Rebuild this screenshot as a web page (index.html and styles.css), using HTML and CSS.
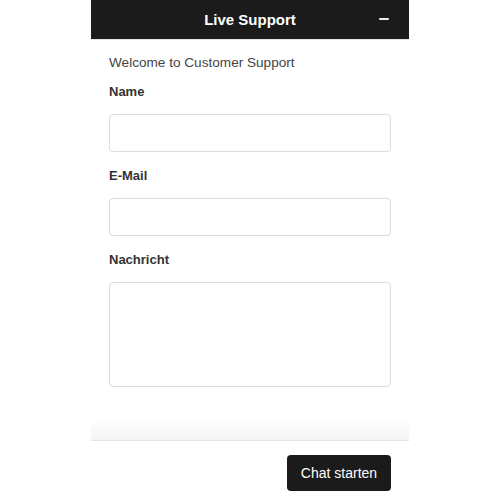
FILE: index.html
```html
<!DOCTYPE html>
<html>
<head>
<meta charset="utf-8">
<link rel="stylesheet" href="styles.css">
</head>
<body>
<div class="panel">
  <header class="head">
    <span class="title">Live Support</span>
    <span class="minimize"></span>
  </header>
  <main class="content">
    <p class="welcome">Welcome to Customer Support</p>
    <label class="label">Name</label>
    <div class="input"></div>
    <label class="label">E-Mail</label>
    <div class="input"></div>
    <label class="label">Nachricht</label>
    <div class="input area"></div>
  </main>
  <div class="fade"></div>
  <footer class="foot">
    <button class="btn">Chat starten</button>
  </footer>
</div>
</body>
</html>
```

FILE: styles.css
```css
html, body {
  margin: 0;
  padding: 0;
  background: #fff;
}
body {
  font-family: "Liberation Sans", Arial, sans-serif;
}
.panel {
  width: 318px;
  height: 500px;
  margin: 0 auto;
  display: flex;
  flex-direction: column;
  background: #fff;
}
.head {
  height: 40px;
  background: #1b1b1b;
  position: relative;
  display: flex;
  align-items: center;
  justify-content: center;
  border-bottom: 1px solid #e6e6e6;
  box-sizing: border-box;
}
.title {
  color: #fff;
  font-weight: bold;
  font-size: 15px;
}
.minimize {
  position: absolute;
  right: 20px;
  top: 18px;
  width: 10px;
  height: 2px;
  background: #f2f2f2;
  border-radius: 1px;
}
.content {
  flex: 1;
  padding: 13px 18px 0;
  display: flex;
  flex-direction: column;
}
.welcome {
  margin: 0;
  font-size: 13.6px;
  line-height: 20px;
  color: #444;
}
.label {
  display: block;
  font-size: 13px;
  font-weight: bold;
  line-height: 18px;
  color: #333;
  margin-top: 9px;
  margin-bottom: 13px;
}
.welcome + .label {
  margin-top: 10px;
}
.input {
  height: 38px;
  box-sizing: border-box;
  border: 1px solid #dcdcdc;
  border-radius: 4px;
  background: #fff;
  margin-bottom: 6px;
}
.input + .label {
  margin-top: 9px;
}
.area {
  height: 105px;
}
.fade {
  height: 20px;
  background: linear-gradient(to bottom, rgba(245,245,245,0), #f3f3f3);
  border-bottom: 1px solid #e4e4e4;
}
.foot {
  height: 59px;
  box-sizing: border-box;
  padding: 14px 18px 0;
  display: flex;
  justify-content: flex-end;
  align-items: flex-start;
}
.btn {
  height: 36px;
  width: 104px;
  border: none;
  border-radius: 4px;
  background: #1b1b1b;
  color: #fff;
  font-family: "Liberation Sans", Arial, sans-serif;
  font-size: 14px;
  padding: 0;
}
```
